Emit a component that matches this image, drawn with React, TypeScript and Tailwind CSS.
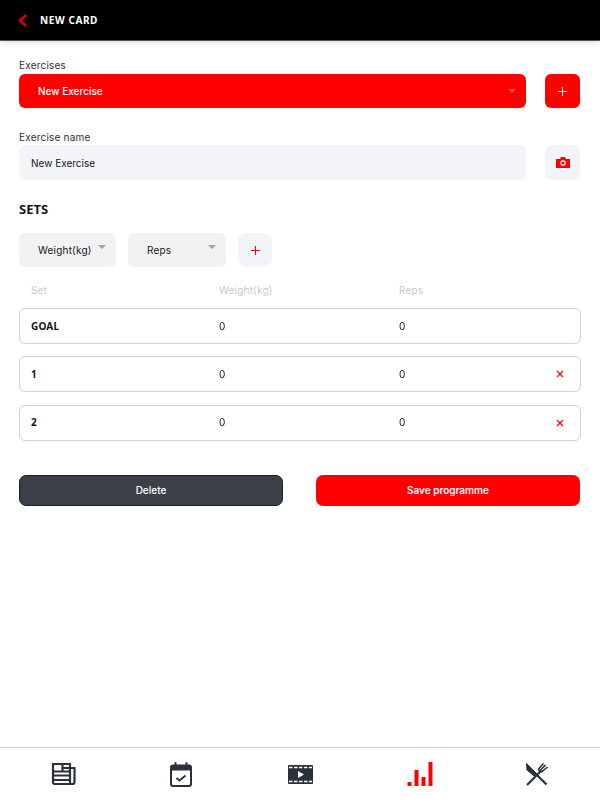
import React from 'react';

const NewspaperIcon = () => (
  <svg width="25" height="24" viewBox="0 0 25 24" fill="none" stroke="#2b303c" strokeWidth="2.200">
    <path d="M2 2h17v20H4a2 2 0 0 1-2-2z" />
    <path d="M19 6h4.500v14a2 2 0 0 1-2 2H19" />
    <path d="M2 13.500h17M2 18h17" />
    <path d="M11.500 2v7.500H2M11.500 6h7.500M11.500 9.500h7.500" />
  </svg>
);

const CalendarIcon = () => (
  <svg width="22" height="25" viewBox="0 0 22 25" fill="none">
    <rect x="1" y="3.500" width="20" height="20.500" rx="2" stroke="#2b303c" strokeWidth="2" />
    <path d="M1 3.500h20v5H1z" fill="#2b303c" />
    <path d="M5.500 1v4M16.500 1v4" stroke="#2b303c" strokeWidth="2" strokeLinecap="round" />
    <path d="M6.500 16l3 2.500 6-5" stroke="#2b303c" strokeWidth="1.800" />
  </svg>
);

const FilmIcon = () => (
  <svg width="25" height="19" viewBox="0 0 25 19">
    <rect x="0" y="0" width="25" height="19" rx="1" fill="#2b303c" />
    <path d="M1 2.500h23M1 16.500h23" stroke="#fff" strokeWidth="1.600" strokeDasharray="3.500 1.500" />
    <path d="M10 6l6 3.500-6 3.500z" fill="#fff" />
  </svg>
);

const BarsIcon = () => (
  <svg width="26" height="25" viewBox="0 0 26 25" fill="#ff0000">
    <rect x="0.500" y="20" width="4" height="4" />
    <rect x="7.500" y="8" width="4" height="16" />
    <rect x="14.500" y="15" width="4" height="9" />
    <rect x="21.500" y="0" width="4" height="24" />
  </svg>
);

const CutleryIcon = () => (
  <svg width="24" height="24" viewBox="0 0 24 24" fill="none" stroke="#2b303c">
    <path d="M1.500 1.500l10 10-2.500 2.500L2 8z" fill="#2b303c" strokeWidth="1" />
    <path d="M21.500 22.500L10 11" strokeWidth="2.200" />
    <path d="M2 23L16.500 8.500" strokeWidth="2.200" />
    <path d="M14 6.500L18.500 1.500M17 9.500l5.500-4.500M15.500 8L20.500 3M14 6.500c-.5 1.500 0 2.500 1 3s2 .5 3-.5" strokeWidth="1.600" />
  </svg>
);

const PlusIcon = ({ color }: { color: string }) => (
  <svg width="9" height="9" viewBox="0 0 9 9" stroke={color} strokeWidth="1">
    <path d="M4.500 0v9M0 4.500h9" />
  </svg>
);

const Caret = ({ color }: { color: string }) => (
  <svg width="8" height="4" viewBox="0 0 8 4" fill={color}>
    <path d="M0 0h8L4 4z" />
  </svg>
);

const SetRow = ({ name, removable }: { name: string; removable?: boolean }) => (
  <div className="flex h-[36px] items-center rounded-[6px] border border-[#cfd1d8] pl-[11px] pr-[16px] text-[10px] text-[#14171c]">
    <span className="w-[188px] font-['Noto_Sans',sans-serif] text-[10px] font-bold">{name}</span>
    <span className="w-[180px]"><span className="inline-block will-change-transform">0</span></span>
    <span className="flex-1"><span className="inline-block will-change-transform">0</span></span>
    {removable && (
      <svg width="8" height="8" viewBox="0 0 8 8" stroke="#ff0000" strokeWidth="1.200">
        <path d="M1 1l6 6M7 1L1 7" />
      </svg>
    )}
  </div>
);

export default function App() {
  return (
    <div className="flex h-[800px] w-[600px] flex-col overflow-hidden bg-white font-['Inter',sans-serif] tracking-[0.2px]">
      <header className="flex h-[41px] shrink-0 items-center border-b border-[#555] bg-black pl-[18px] shadow-[0_2px_4px_rgba(0,0,0,0.12)]">
        <svg width="9" height="13" viewBox="0 0 9 13" fill="none" stroke="#e00000" strokeWidth="2.400">
          <path d="M8 1L2 6.500 8 12" />
        </svg>
        <h1 className="ml-[13px] font-['Noto_Sans',sans-serif] text-[10px] font-bold tracking-[0.6px] text-white">NEW CARD</h1>
      </header>

      <main className="flex-1 pl-[19px] pr-[19px] pt-[18px]">
        <label className="block h-[15px] text-[10px] leading-[13px] text-[#2b2f36]">Exercises</label>
        <div className="flex gap-[19px]">
          <div className="flex h-[34px] w-[507px] items-center justify-between rounded-[6px] bg-[#ff0000] pl-[19px] pr-[10px] text-[10px] font-medium tracking-normal text-white">
            <span>New Exercise</span>
            <Caret color="#ff5a66" />
          </div>
          <button className="flex h-[34px] w-[35px] items-center justify-center rounded-[6px] bg-[#ff0000]">
            <PlusIcon color="#ffffff" />
          </button>
        </div>

        <label className="mt-[23px] block h-[14px] text-[10px] leading-[13px] text-[#2b2f36]">Exercise name</label>
        <div className="flex gap-[19px]">
          <div className="flex h-[35px] w-[507px] items-center rounded-[6px] bg-[#f3f4f8] pl-[12px] pt-[2px] text-[10px] tracking-normal text-[#14171c]">New Exercise</div>
          <button className="flex h-[35px] w-[35px] items-center justify-center rounded-[8px] bg-[#f3f4f8]">
            <svg width="14" height="11" viewBox="0 0 14 11">
              <path d="M0 2h4l1-2h4l1 2h4v9H0z" fill="#ff0000" />
              <circle cx="7" cy="6" r="2.200" fill="none" stroke="#fff" strokeWidth="1.200" />
            </svg>
          </button>
        </div>

        <h2 className="mt-[21px] h-[32px] font-['Noto_Sans',sans-serif] text-[13px] font-bold leading-[16px] tracking-normal text-[#14171c]">SETS</h2>

        <div className="flex gap-[12px]">
          <div className="flex h-[34px] w-[97px] items-start rounded-[6px] bg-[#f2f2f3] pl-[19px] pr-[10px]">
            <span className="mt-[11px] text-[10px] leading-[13px] text-[#14171c]">Weight(kg)</span>
            <span className="ml-auto mt-[12px] flex"><Caret color="#a3a3a6" /></span>
          </div>
          <div className="flex h-[34px] w-[98px] items-start rounded-[6px] bg-[#f2f2f3] pl-[19px] pr-[10px]">
            <span className="mt-[11px] text-[10px] leading-[13px] text-[#14171c]">Reps</span>
            <span className="ml-auto mt-[12px] flex"><Caret color="#a3a3a6" /></span>
          </div>
          <button className="flex h-[34px] w-[34px] items-center justify-center rounded-[8px] bg-[#f3f4f8]">
            <PlusIcon color="#ff0000" />
          </button>
        </div>

        <div className="mt-[16px] flex h-[14px] items-center pl-[12px] text-[10px] text-[#c4c8d0]">
          <span className="w-[188px]">Set</span>
          <span className="w-[180px]">Weight(kg)</span>
          <span>Reps</span>
        </div>

        <div className="mt-[11px] flex w-[562px] flex-col gap-[12.400px]">
          <SetRow name="GOAL" />
          <SetRow name="1" removable />
          <SetRow name="2" removable />
        </div>

        <div className="mt-[34px] flex w-[561px] gap-[33px]">
          <button className="h-[31px] w-[264px] rounded-[7px] border border-[#14202c] bg-[#3b3f48] pt-[1px] text-[10px] font-medium tracking-normal text-white">Delete</button>
          <button className="h-[31px] w-[264px] rounded-[7px] bg-[#ff0000] pt-[1px] text-[10px] font-semibold tracking-normal text-white">Save programme</button>
        </div>
      </main>

      <nav className="flex h-[53px] shrink-0 items-start border-t border-[#cfcfcf] bg-white pt-[14px]">
        <div className="flex w-[126px] justify-center"><NewspaperIcon /></div>
        <div className="flex w-[110px] justify-center"><CalendarIcon /></div>
        <div className="flex w-[129px] justify-center pt-[3px]"><FilmIcon /></div>
        <div className="flex w-[110px] justify-center"><BarsIcon /></div>
        <div className="flex w-[123px] justify-center"><CutleryIcon /></div>
      </nav>
    </div>
  );
}
